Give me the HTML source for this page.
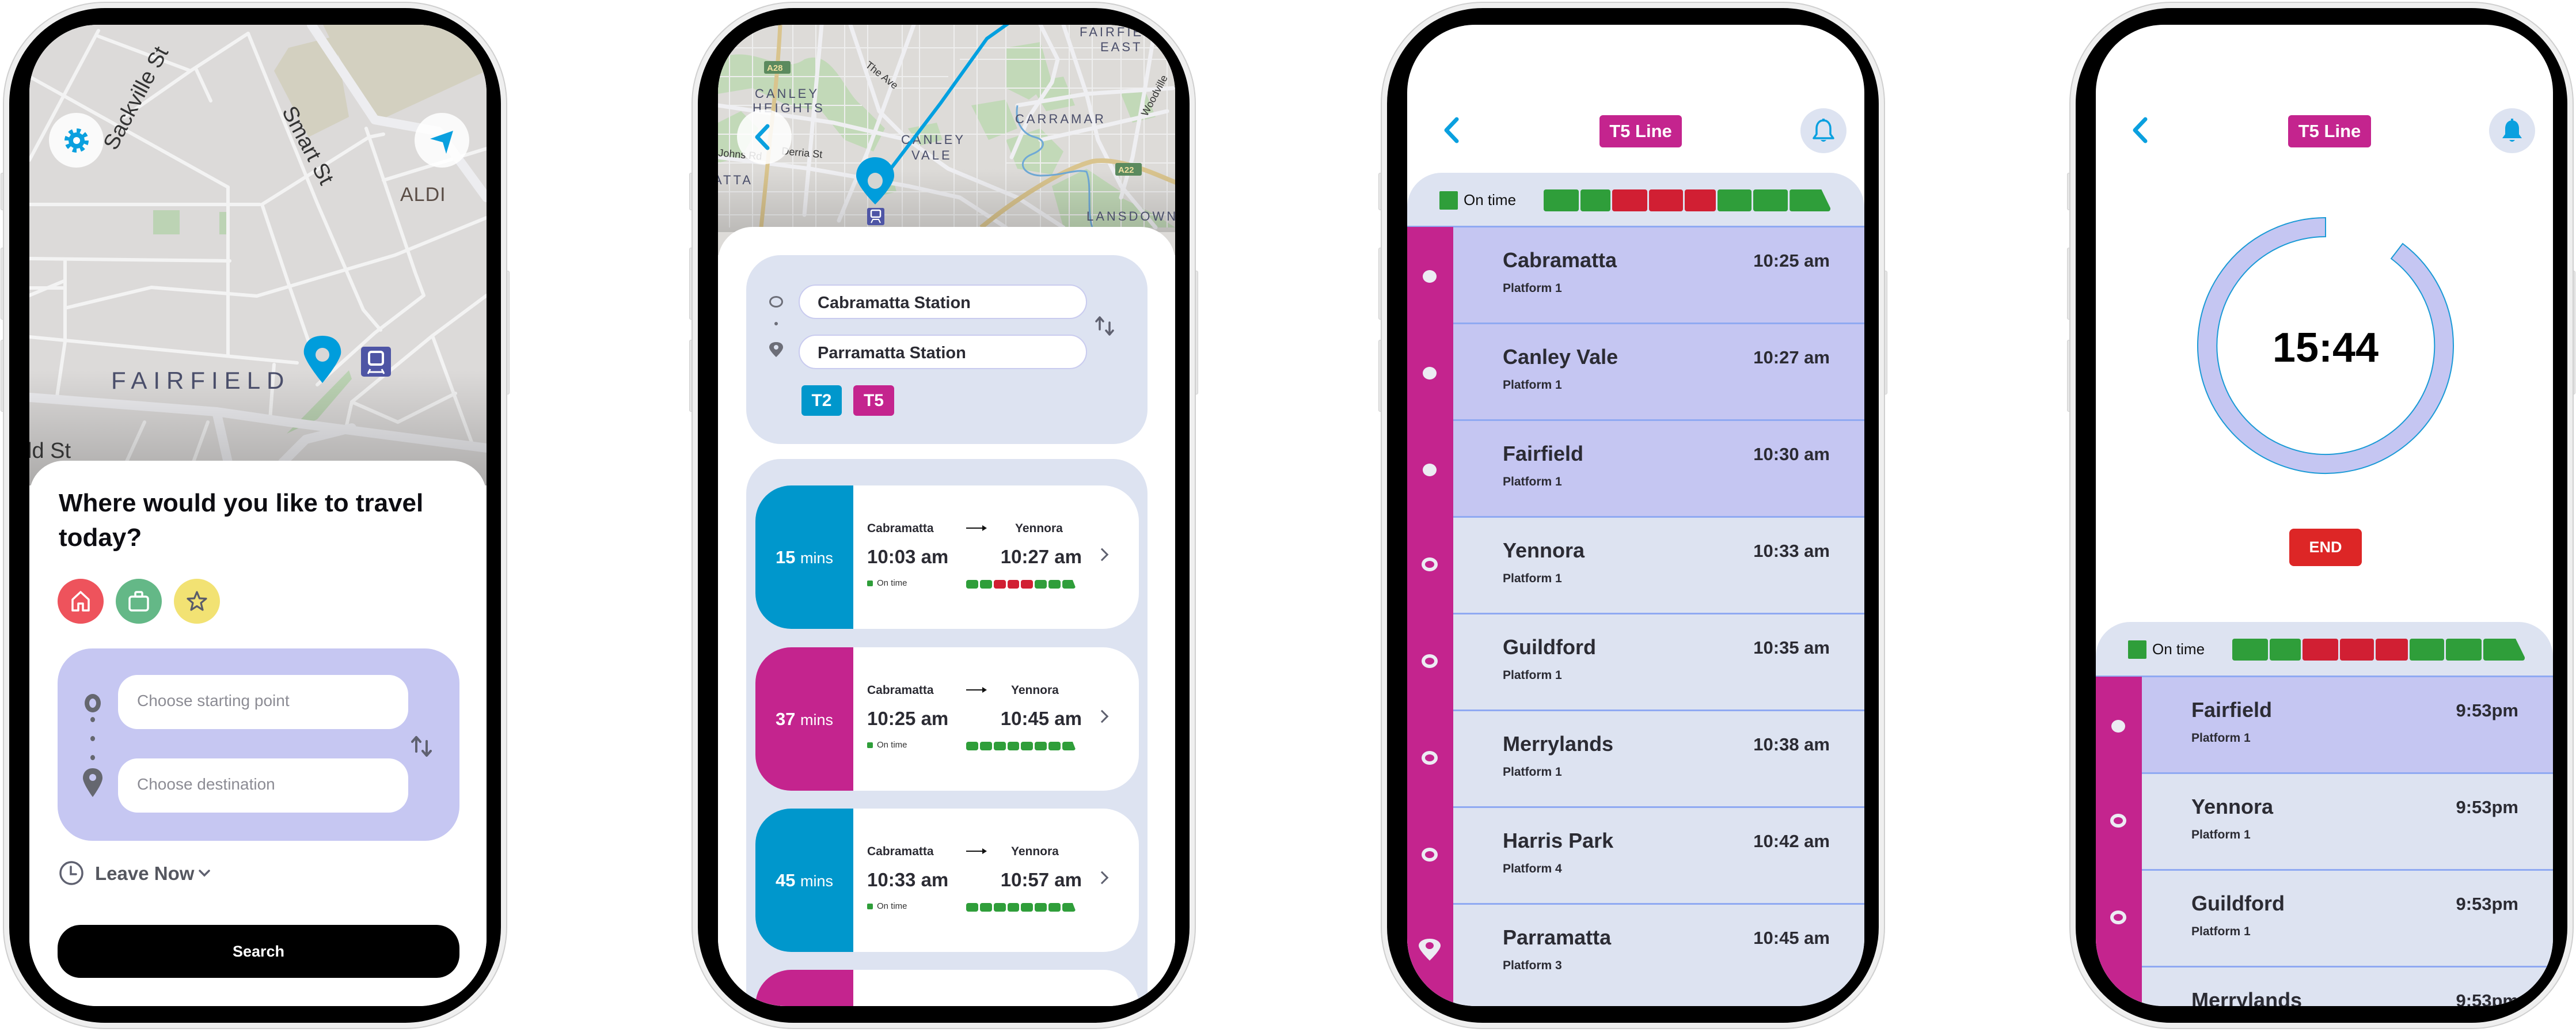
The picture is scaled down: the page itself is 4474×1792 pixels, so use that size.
<!DOCTYPE html>
<html><head><meta charset="utf-8">
<style>
*{box-sizing:border-box;margin:0;padding:0}
html,body{width:4474px;height:1792px;overflow:hidden}
body{background:#fff;position:relative;font-family:"Liberation Sans Narrow","Liberation Sans",sans-serif;color:#2b2b33}
.phone{position:absolute;top:5px;width:872px;height:1780px;border-radius:175px;background:#000;border:9px solid #efefef;box-shadow:0 0 0 2px #cfcfcf}
.btn{position:absolute;width:9px;background:#e6e6e6;border:1px solid #cfcfcf;border-radius:3px}
.screen{position:absolute;left:35px;top:29px;width:794px;height:1704px;border-radius:118px;overflow:hidden;background:#fff}
.abs{position:absolute}
.b{font-weight:bold}
.pill{border-radius:6px}
.seg{display:flex;gap:3px;position:absolute}
.seg div{height:100%;border-radius:4px}
.g{background:#2f9e3a}.r{background:#d11f33}
.last{clip-path:polygon(0 0,78% 0,100% 85%,100% 100%,0 100%)}
.row{position:absolute;left:0;width:794px;height:168px;border-top:3px solid #8fa9f2}
.row .nm{position:absolute;left:166px;top:36px;font-size:36px;font-weight:bold;color:#2b2b33}
.row .pf{position:absolute;left:166px;top:94px;font-size:21px;font-weight:bold;color:#2b2b33}
.row .tm{position:absolute;right:60px;top:40px;font-size:31px;font-weight:bold;color:#2b2b33}
.dot{position:absolute;left:27px;width:24px;height:22px;border-radius:50%;background:#ececf3}
.ring{position:absolute;left:25px;width:28px;height:24px;border-radius:50%;border:6px solid #ececf3}
.card{position:absolute;left:65px;width:666px;height:249px;background:#fff;border-radius:62px;overflow:hidden}
.card .lc{position:absolute;left:0;top:0;width:170px;height:100%;color:#fff;text-align:center;line-height:249px;font-size:31px;font-weight:bold}
.card .lc span{font-weight:normal;font-size:27px}
.card .f{position:absolute;left:194px;top:63px;font-size:21px;font-weight:bold}
.card .t{position:absolute;top:70px;font-size:21px;font-weight:bold}
.card .tt{position:absolute;top:105px;font-size:33px;font-weight:bold}
.card .ot{position:absolute;left:194px;top:161px;font-size:15px;color:#333}
.card .ot i{display:inline-block;width:10px;height:10px;background:#2f9e3a;border-radius:2px;margin-right:7px;vertical-align:-1px}
.card .arr{position:absolute;left:366px;top:73px;width:34px;height:2px;background:#111}
.card .arr:after{content:"";position:absolute;right:-2px;top:-4px;border-left:8px solid #111;border-top:5px solid transparent;border-bottom:5px solid transparent}
.card .chev{position:absolute;left:594px;top:112px;width:16px;height:16px;border-right:3px solid #5f6170;border-bottom:3px solid #5f6170;transform:rotate(-45deg)}
</style></head><body>

<div class="btn" style="left:1px;top:300px;height:65px"></div>
<div class="btn" style="left:1px;top:430px;height:125px"></div>
<div class="btn" style="left:1px;top:590px;height:125px"></div>
<div class="btn" style="left:876px;top:470px;height:215px"></div>
<div class="btn" style="left:1197px;top:300px;height:65px"></div>
<div class="btn" style="left:1197px;top:430px;height:125px"></div>
<div class="btn" style="left:1197px;top:590px;height:125px"></div>
<div class="btn" style="left:2072px;top:470px;height:215px"></div>
<div class="btn" style="left:2394px;top:300px;height:65px"></div>
<div class="btn" style="left:2394px;top:430px;height:125px"></div>
<div class="btn" style="left:2394px;top:590px;height:125px"></div>
<div class="btn" style="left:3269px;top:470px;height:215px"></div>
<div class="btn" style="left:3590px;top:300px;height:65px"></div>
<div class="btn" style="left:3590px;top:430px;height:125px"></div>
<div class="btn" style="left:3590px;top:590px;height:125px"></div>
<div class="btn" style="left:4464px;top:470px;height:215px"></div>

<!-- PHONE 1 -->
<div class="phone" style="left:7px"><div class="screen">
<svg class="abs" style="left:0;top:0" width="794" height="800" viewBox="0 0 794 800">
<rect width="794" height="800" fill="#dcdad9"/>
<polygon points="425,80 450,40 530,20 555,160 485,195" fill="#d3d0c0"/>
<polygon points="510,0 794,0 794,80 610,165 555,90" fill="#d3d0c0"/>
<rect x="215" y="322" width="46" height="42" fill="#bcd3b4"/>
<rect x="330" y="325" width="12" height="39" fill="#bcd3b4"/>
<polygon points="447,710 555,600 560,615 500,685" fill="#bcd3b4"/>
<g fill="none" stroke="#f3f3f3" stroke-width="6" stroke-linecap="round" stroke-linejoin="round">
<polyline points="0,312 400,312"/>
<polyline points="0,406 348,410"/>
<polyline points="0,457 62,457"/>
<polyline points="62,492 212,456 395,471 635,400 794,335"/>
<polyline points="0,542 340,575 465,587"/>
<polyline points="345,282 345,575"/>
<polyline points="0,90 345,282"/>
<polyline points="120,10 0,235"/>
<polyline points="120,20 280,80 380,15"/>
<polyline points="165,160 280,80"/>
<polyline points="290,78 315,132"/>
<polyline points="380,15 500,310 580,495 610,530"/>
<polyline points="404,312 590,195 615,190"/>
<polyline points="585,180 670,430 685,470 600,535 500,625"/>
<polyline points="404,312 452,455 485,550"/>
<polyline points="62,409 62,550 48,645"/>
<polyline points="425,590 418,685"/>
<polyline points="794,470 700,540 560,655 550,700"/>
<polyline points="700,540 770,730"/>
<polyline points="0,470 60,445"/>
<polyline points="615,270 794,215"/>
<polyline points="560,655 640,690 740,640"/>
<polyline points="200,690 150,800"/>
<polyline points="310,690 270,800"/>
</g>
<g fill="none" stroke="#ededf0" stroke-width="16" stroke-linecap="round" stroke-linejoin="round">
<polyline points="490,0 600,165 710,185 794,300"/>
<polyline points="0,647 325,672 450,690 794,735"/>
<polyline points="325,672 345,760"/>
<polyline points="440,760 480,720 560,700"/>
</g>
<defs><linearGradient id="sh" x1="0" y1="0" x2="0" y2="1"><stop offset="0" stop-color="#000" stop-opacity="0"/><stop offset="1" stop-color="#000" stop-opacity="0.22"/></linearGradient></defs>
<rect x="0" y="600" width="794" height="200" fill="url(#sh)"/>
<text x="150" y="220" transform="rotate(-62 150 220)" font-family="Liberation Sans" font-size="38" fill="#333">Sackville St</text>
<text x="438" y="150" transform="rotate(62 438 150)" font-family="Liberation Sans" font-size="38" fill="#333">Smart St</text>
<text x="644" y="306" font-family="Liberation Sans" font-size="34" fill="#5a4d46" letter-spacing="1">ALDI</text>
<text x="142" y="632" font-family="Liberation Sans" font-size="42" fill="#4a4e6a" letter-spacing="11">FAIRFIELD</text>
<text x="-4" y="752" font-family="Liberation Sans" font-size="38" fill="#333">ld St</text>
<rect x="576" y="559" width="52" height="52" rx="5" fill="#4e55a5"/>
<rect x="590" y="568" width="24" height="22" rx="4" fill="none" stroke="#fff" stroke-width="4"/>
<path d="M592 598 L588 606 M612 598 L616 606 M588 603 H616" stroke="#fff" stroke-width="3"/>
<path d="M509 540 C478 540 474 566 478 575 C484 592 509 622 509 622 C509 622 534 592 540 575 C544 566 540 540 509 540Z" fill="#009ddc"/>
<circle cx="509" cy="573" r="12" fill="#d8d7d7"/>
</svg>
<div class="abs" style="left:34px;top:153px;width:95px;height:95px;border-radius:50%;background:rgba(255,255,255,.85)"></div>
<svg class="abs" style="left:56px;top:175px" width="52" height="52" viewBox="0 0 52 52"><circle cx="26" cy="26" r="17" fill="none" stroke="#0aa0df" stroke-width="8" stroke-dasharray="6.7 6.65"/><circle cx="26" cy="26" r="14" fill="#0aa0df"/><circle cx="26" cy="26" r="6" fill="#fff"/></svg>
<div class="abs" style="left:669px;top:153px;width:95px;height:95px;border-radius:50%;background:rgba(255,255,255,.85)"></div>
<svg class="abs" style="left:694px;top:180px" width="46" height="46" viewBox="0 0 46 46"><path d="M2 18 L42 4 L30 44 L24 24Z" fill="#0aa0df"/></svg>
<div class="abs" style="left:0;top:757px;width:794px;height:960px;background:#fff;border-radius:60px 60px 0 0"></div>
<div class="abs b" style="left:51px;top:801px;line-height:60px;color:#0d0d12;font-family:'Liberation Sans',sans-serif;font-size:44px">Where would you like to travel<br>today?</div>
<div class="abs" style="left:49px;top:962px;width:80px;height:78px;border-radius:50%;background:#ee535c"></div>
<svg class="abs" style="left:69px;top:981px" width="40" height="40" viewBox="0 0 40 40"><path d="M6 36 V17 L20 4 L34 17 V36 H24 V24 H16 V36Z" fill="none" stroke="#fff" stroke-width="3.5" stroke-linejoin="round"/></svg>
<div class="abs" style="left:150px;top:962px;width:80px;height:78px;border-radius:50%;background:#64b887"></div>
<svg class="abs" style="left:170px;top:981px" width="40" height="40" viewBox="0 0 40 40"><rect x="4" y="12" width="32" height="24" rx="4" fill="none" stroke="#fff" stroke-width="3.5"/><rect x="14" y="4" width="12" height="8" rx="2" fill="none" stroke="#fff" stroke-width="3.5"/></svg>
<div class="abs" style="left:251px;top:962px;width:80px;height:78px;border-radius:50%;background:#f2e273"></div>
<svg class="abs" style="left:271px;top:981px" width="40" height="40" viewBox="0 0 40 40"><path d="M20 4 L24.5 15 L36 15.5 L27 23 L30 35 L20 28.5 L10 35 L13 23 L4 15.5 L15.5 15Z" fill="none" stroke="#5a5c6a" stroke-width="3.2" stroke-linejoin="round"/></svg>
<div class="abs" style="left:49px;top:1083px;width:698px;height:334px;border-radius:60px;background:#c6c7f2"></div>
<div class="abs" style="left:154px;top:1129px;width:504px;height:94px;border-radius:34px;background:#fff"></div>
<div class="abs" style="left:187px;top:1158px;font-size:28px;color:#8c8c94">Choose starting point</div>
<div class="abs" style="left:154px;top:1274px;width:504px;height:94px;border-radius:34px;background:#fff"></div>
<div class="abs" style="left:187px;top:1303px;font-size:28px;color:#8c8c94">Choose destination</div>
<div class="abs" style="left:96px;top:1162px;width:28px;height:32px;border-radius:50%;border:8px solid #65676f"></div>
<div class="abs" style="left:106px;top:1202px;width:8px;height:9px;border-radius:50%;background:#65676f"></div>
<div class="abs" style="left:106px;top:1235px;width:8px;height:9px;border-radius:50%;background:#65676f"></div>
<div class="abs" style="left:106px;top:1268px;width:8px;height:9px;border-radius:50%;background:#65676f"></div>
<svg class="abs" style="left:92px;top:1290px" width="36" height="52" viewBox="0 0 36 52"><path d="M18 1 C7 1 1 9 1 18 C1 28 18 51 18 51 C18 51 35 28 35 18 C35 9 29 1 18 1Z" fill="#65676f"/><circle cx="18" cy="17" r="6" fill="#c6c7f2"/></svg>
<svg class="abs" style="left:660px;top:1232px" width="44" height="44" viewBox="0 0 44 44"><path d="M12 30 V6 M5 13 L12 5 L19 13 M30 12 V36 M23 29 L30 37 L37 29" fill="none" stroke="#5f6170" stroke-width="4" stroke-linecap="round" stroke-linejoin="round"/></svg>
<svg class="abs" style="left:50px;top:1450px" width="46" height="46" viewBox="0 0 46 46"><circle cx="23" cy="23" r="19" fill="none" stroke="#5f6170" stroke-width="3.5"/><path d="M22 12 V25 H31" fill="none" stroke="#5f6170" stroke-width="3.5" stroke-linecap="round"/></svg>
<div class="abs" style="left:114px;top:1455px;font-size:33px;color:#55575f;font-weight:bold">Leave Now</div>
<svg class="abs" style="left:293px;top:1465px" width="22" height="16" viewBox="0 0 22 16"><path d="M3 4 L11 12 L19 4" fill="none" stroke="#5f6170" stroke-width="3.5" stroke-linecap="round"/></svg>
<div class="abs b" style="left:49px;top:1563px;width:698px;height:92px;border-radius:40px;background:#000;color:#fff;text-align:center;line-height:92px;font-size:27px;font-family:'Liberation Sans',sans-serif">Search</div>
</div></div>

<!-- PHONE 2 -->
<div class="phone" style="left:1203px"><div class="screen">
<svg class="abs" style="left:0;top:0" width="794" height="400" viewBox="0 0 794 400">
<rect width="794" height="400" fill="#dddbd8"/>
<g fill="#c2d9b8">
<path d="M0 60 C60 30 110 90 150 60 C200 40 220 120 250 140 L290 180 L270 220 L220 200 L180 150 L120 140 L60 110 L0 120Z"/>
<path d="M0 170 L40 150 L70 180 L40 230 L0 240Z"/>
<path d="M500 40 L560 30 L580 100 L540 130 L500 110Z"/>
<path d="M440 140 L500 130 L520 180 L470 200Z"/>
<path d="M500 200 L560 180 L600 220 L580 260 L520 250Z"/>
<path d="M580 280 L640 250 L700 290 L680 352 L600 352Z"/>
<path d="M640 320 L700 300 L760 330 L794 352 L650 352Z"/>
<path d="M330 180 L380 170 L390 200 L350 210Z"/>
<path d="M260 260 L300 250 L310 290 L270 300Z"/>
<path d="M700 120 L740 110 L760 160 L720 170Z"/>
<path d="M540 100 L600 90 L620 140 L570 150Z"/>
</g>
<g fill="none" stroke="#eeeeee" stroke-width="2">
<path d="M0 40 H794 M0 90 H400 M0 140 H250 M0 190 H794 M0 240 H300 M0 290 H794 M0 330 H794 M300 110 H794 M500 240 H794 M420 60 H794"/>
<path d="M20 0 V352 M60 0 V352 M130 0 V352 M170 0 V352 M220 0 V352 M260 0 V352 M320 0 V352 M350 0 V352 M410 0 V352 M450 0 V352 M500 0 V352 M560 0 V352 M610 0 V352 M650 0 V352 M700 0 V352 M740 0 V352 M780 0 V352"/>
</g>
<g fill="none" stroke="#efeff2" stroke-width="7" stroke-linecap="round">
<path d="M230 0 L280 150 L330 200 L400 250 L520 300 L600 352"/>
<path d="M340 0 L260 220 L210 340"/>
<path d="M0 140 L200 170 L330 200"/>
<path d="M0 230 L160 250 L330 280 L420 300 L500 352"/>
<path d="M560 0 L590 60 L580 100 L540 160 L510 230"/>
<path d="M600 0 L640 120 L660 200 L700 280 L760 352"/>
<path d="M520 140 L640 120 L790 110"/>
<path d="M560 200 L650 180 L780 150"/>
<path d="M760 0 L740 120 L720 230 L700 300"/>
<path d="M180 0 L150 330"/>
</g>
<path d="M108 0 C105 60 100 120 90 200 C85 260 78 320 75 352" fill="none" stroke="#d9c48e" stroke-width="7"/>
<path d="M457 352 C520 300 600 250 651 237 C700 230 760 260 798 275" fill="none" stroke="#d9c48e" stroke-width="8"/>
<path d="M520 140 C515 170 530 190 550 195 C570 200 570 215 545 225 C520 235 525 260 560 262 C600 262 620 250 640 255 C650 280 640 320 650 352" fill="none" stroke="#6fa9d6" stroke-width="3"/>
<defs><linearGradient id="sh2" x1="0" y1="0" x2="0" y2="1"><stop offset="0" stop-color="#000" stop-opacity="0"/><stop offset="1" stop-color="#000" stop-opacity="0.15"/></linearGradient></defs>
<rect x="0" y="250" width="794" height="110" fill="url(#sh2)"/>
<g font-family="Liberation Sans" fill="#4a4e6a" letter-spacing="4">
<text x="64" y="127" font-size="22">CANLEY</text><text x="60" y="152" font-size="22">HEIGHTS</text>
<text x="318" y="207" font-size="22">CANLEY</text><text x="336" y="234" font-size="22">VALE</text>
<text x="516" y="171" font-size="22">CARRAMAR</text>
<text x="640" y="340" font-size="22">LANSDOWN</text>
<text x="628" y="20" font-size="22">FAIRFIELD</text><text x="664" y="46" font-size="22">EAST</text>
<text x="-8" y="277" font-size="22">ATTA</text>
</g>
<g font-family="Liberation Sans" fill="#333" font-size="18">
<text x="110" y="225" transform="rotate(5 110 225)">Derria St</text>
<text x="0" y="228" transform="rotate(5 0 228)">Johns Rd</text>
<text x="255" y="72" transform="rotate(38 255 72)">The Ave</text>
<text x="745" y="160" transform="rotate(-62 745 160)">Woodville</text>
</g>
<rect x="80" y="63" width="46" height="22" rx="3" fill="#5b8a5e"/><text x="85" y="80" font-family="Liberation Sans" font-size="15" font-weight="bold" fill="#f0e0a0">A28</text>
<rect x="690" y="240" width="46" height="22" rx="3" fill="#5b8a5e"/><text x="695" y="257" font-family="Liberation Sans" font-size="15" font-weight="bold" fill="#f0e0a0">A22</text>
<path d="M300 250 L386 137 L467 24 L505 -3" fill="none" stroke="#00a0e0" stroke-width="6" stroke-linecap="round"/>
<rect x="259" y="318" width="30" height="30" rx="3" fill="#4e55a5"/>
<rect x="266" y="322" width="16" height="12" rx="2" fill="none" stroke="#fff" stroke-width="2.5"/>
<path d="M266 344 L269 338 H279 L282 344" stroke="#fff" stroke-width="2" fill="none"/>
<path d="M273 230 C252 230 240 246 240 262 C240 280 273 312 273 312 C273 312 306 280 306 262 C306 246 294 230 273 230Z" fill="#009ddc"/>
<ellipse cx="273" cy="271" rx="13" ry="14" fill="#d5d6d3"/>
</svg>
<div class="abs" style="left:33px;top:147px;width:95px;height:95px;border-radius:50%;background:rgba(255,255,255,.85)"></div>
<svg class="abs" style="left:62px;top:172px" width="30" height="46" viewBox="0 0 30 46"><path d="M24 4 L6 23 L24 42" fill="none" stroke="#0aa0df" stroke-width="7" stroke-linecap="round" stroke-linejoin="round"/></svg>
<div class="abs" style="left:0;top:351px;width:794px;height:1353px;background:#fff;border-radius:60px 60px 0 0"></div>
<div class="abs" style="left:49px;top:400px;width:697px;height:328px;border-radius:60px;background:#dde3f1"></div>
<div class="abs" style="left:89px;top:471px;width:24px;height:20px;border-radius:50%;border:3px solid #6c6e78"></div>
<div class="abs" style="left:98px;top:516px;width:6px;height:6px;border-radius:50%;background:#6c6e78"></div>
<svg class="abs" style="left:88px;top:550px" width="26" height="28" viewBox="0 0 26 28"><path d="M13 1 C5 1 1 5 1 10 C1 16 13 27 13 27 C13 27 25 16 25 10 C25 5 21 1 13 1Z" fill="#6c6e78"/><circle cx="13" cy="10" r="4" fill="#dde3f1"/></svg>
<div class="abs" style="left:140px;top:451px;width:501px;height:60px;border-radius:30px;background:#fff;border:2px solid #c9cbef"></div>
<div class="abs b" style="left:173px;top:467px;font-size:29px;color:#2b2b33">Cabramatta Station</div>
<div class="abs" style="left:140px;top:538px;width:501px;height:60px;border-radius:30px;background:#fff;border:2px solid #c9cbef"></div>
<div class="abs b" style="left:173px;top:554px;font-size:29px;color:#2b2b33">Parramatta Station</div>
<svg class="abs" style="left:652px;top:505px" width="40" height="36" viewBox="0 0 40 36"><path d="M11 24 V4 M5 10 L11 3 L17 10 M28 12 V32 M22 26 L28 33 L34 26" fill="none" stroke="#5f6170" stroke-width="3.5" stroke-linecap="round" stroke-linejoin="round"/></svg>
<div class="abs b pill" style="left:145px;top:626px;width:70px;height:53px;background:#0097cc;color:#fff;text-align:center;line-height:53px;font-size:30px">T2</div>
<div class="abs b pill" style="left:235px;top:626px;width:71px;height:53px;background:#c4248e;color:#fff;text-align:center;line-height:53px;font-size:30px">T5</div>
<div class="abs" style="left:49px;top:754px;width:697px;height:950px;border-radius:60px 60px 0 0;background:#dde3f1"></div>

<div class="card" style="top:800px"><div class="lc" style="background:#0097cc">15 <span>mins</span></div>
<div class="f">Cabramatta</div><div class="arr"></div><div class="t" style="left:451px;top:63px">Yennora</div>
<div class="tt" style="left:194px">10:03 am</div><div class="tt" style="right:99px">10:27 am</div><div class="chev"></div>
<div class="ot"><i></i>On time</div>
<div class="seg" style="left:366px;top:164px;width:190px;height:15px"><div class="g" style="flex:1"></div><div class="g" style="flex:1"></div><div class="r" style="flex:1"></div><div class="r" style="flex:1"></div><div class="r" style="flex:1"></div><div class="g" style="flex:1"></div><div class="g" style="flex:1"></div><div class="g last" style="flex:1.1"></div></div></div>

<div class="card" style="top:1081px"><div class="lc" style="background:#c4248e">37 <span>mins</span></div>
<div class="f">Cabramatta</div><div class="arr"></div><div class="t" style="left:444px;top:63px">Yennora</div>
<div class="tt" style="left:194px">10:25 am</div><div class="tt" style="right:99px">10:45 am</div><div class="chev"></div>
<div class="ot"><i></i>On time</div>
<div class="seg" style="left:366px;top:164px;width:190px;height:15px"><div class="g" style="flex:1"></div><div class="g" style="flex:1"></div><div class="g" style="flex:1"></div><div class="g" style="flex:1"></div><div class="g" style="flex:1"></div><div class="g" style="flex:1"></div><div class="g" style="flex:1"></div><div class="g last" style="flex:1.1"></div></div></div>

<div class="card" style="top:1361px"><div class="lc" style="background:#0097cc">45 <span>mins</span></div>
<div class="f">Cabramatta</div><div class="arr"></div><div class="t" style="left:444px;top:63px">Yennora</div>
<div class="tt" style="left:194px">10:33 am</div><div class="tt" style="right:99px">10:57 am</div><div class="chev"></div>
<div class="ot"><i></i>On time</div>
<div class="seg" style="left:366px;top:164px;width:190px;height:15px"><div class="g" style="flex:1"></div><div class="g" style="flex:1"></div><div class="g" style="flex:1"></div><div class="g" style="flex:1"></div><div class="g" style="flex:1"></div><div class="g" style="flex:1"></div><div class="g" style="flex:1"></div><div class="g last" style="flex:1.1"></div></div></div>

<div class="card" style="top:1641px;height:63px;border-radius:62px 62px 0 0"><div class="lc" style="background:#c4248e"></div></div>
</div></div>

<!-- PHONE 3 -->
<div class="phone" style="left:2400px"><div class="screen">
<svg class="abs" style="left:62px;top:160px" width="30" height="46" viewBox="0 0 30 46"><path d="M24 4 L6 23 L24 42" fill="none" stroke="#0aa0df" stroke-width="7" stroke-linecap="round" stroke-linejoin="round"/></svg>
<div class="abs b pill" style="left:334px;top:157px;width:143px;height:56px;background:#c4248e;color:#fff;text-align:center;line-height:56px;font-size:31px">T5 Line</div>
<div class="abs" style="left:683px;top:145px;width:80px;height:78px;border-radius:50%;background:#dde3f1"></div>
<svg class="abs" style="left:703px;top:162px" width="40" height="46" viewBox="0 0 40 46"><path d="M20 4 C12 4 8 11 8 18 V28 L3 35 H37 L32 28 V18 C32 11 28 4 20 4Z" fill="none" stroke="#0aa0df" stroke-width="3.5" stroke-linejoin="round"/><path d="M15 38 Q20 44 25 38Z" fill="#0aa0df"/><rect x="18" y="1" width="4" height="5" fill="#0aa0df"/></svg>
<div class="abs" style="left:0;top:257px;width:794px;height:120px;border-radius:60px 60px 0 0;background:#dde3f1"></div>
<div class="abs" style="left:56px;top:289px;width:32px;height:32px;background:#2f9e3a;border-radius:2px"></div>
<div class="abs" style="left:98px;top:289px;font-size:26px;color:#111">On time</div>
<div class="seg" style="left:237px;top:286px;width:498px;height:38px"><div class="g" style="flex:107"></div><div class="g" style="flex:93"></div><div class="r" style="flex:108"></div><div class="r" style="flex:103"></div><div class="r" style="flex:96"></div><div class="g" style="flex:104"></div><div class="g" style="flex:107"></div><div class="g last" style="flex:125"></div></div>
<div class="row" style="top:349px;background:#c5c6f2"><div class="nm">Cabramatta</div><div class="pf">Platform 1</div><div class="tm">10:25 am</div></div>
<div class="row" style="top:517px;background:#c5c6f2"><div class="nm">Canley Vale</div><div class="pf">Platform 1</div><div class="tm">10:27 am</div></div>
<div class="row" style="top:685px;background:#c5c6f2"><div class="nm">Fairfield</div><div class="pf">Platform 1</div><div class="tm">10:30 am</div></div>
<div class="row" style="top:853px;background:#dde3f1"><div class="nm">Yennora</div><div class="pf">Platform 1</div><div class="tm">10:33 am</div></div>
<div class="row" style="top:1021px;background:#dde3f1"><div class="nm">Guildford</div><div class="pf">Platform 1</div><div class="tm">10:35 am</div></div>
<div class="row" style="top:1189px;background:#dde3f1"><div class="nm">Merrylands</div><div class="pf">Platform 1</div><div class="tm">10:38 am</div></div>
<div class="row" style="top:1357px;background:#dde3f1"><div class="nm">Harris Park</div><div class="pf">Platform 4</div><div class="tm">10:42 am</div></div>
<div class="row" style="top:1525px;background:#dde3f1;height:179px"><div class="nm">Parramatta</div><div class="pf">Platform 3</div><div class="tm">10:45 am</div></div>
<div class="abs" style="left:0;top:351px;width:80px;height:1353px;background:#c4248e"></div>
<div class="dot" style="top:426px"></div><div class="dot" style="top:594px"></div><div class="dot" style="top:762px"></div>
<div class="ring" style="top:925px"></div><div class="ring" style="top:1093px"></div><div class="ring" style="top:1261px"></div><div class="ring" style="top:1429px"></div>
<svg class="abs" style="left:19px;top:1585px" width="40" height="42" viewBox="0 0 40 42"><path d="M20 2 C8 2 1 8 1 14 C1 22 20 40 20 40 C20 40 39 22 39 14 C39 8 32 2 20 2Z" fill="#ececf3"/><ellipse cx="20" cy="14" rx="7" ry="6" fill="#c4248e"/></svg>
</div></div>

<!-- PHONE 4 -->
<div class="phone" style="left:3596px"><div class="screen">
<svg class="abs" style="left:62px;top:160px" width="30" height="46" viewBox="0 0 30 46"><path d="M24 4 L6 23 L24 42" fill="none" stroke="#0aa0df" stroke-width="7" stroke-linecap="round" stroke-linejoin="round"/></svg>
<div class="abs b pill" style="left:334px;top:157px;width:144px;height:56px;background:#c4248e;color:#fff;text-align:center;line-height:56px;font-size:31px">T5 Line</div>
<div class="abs" style="left:683px;top:145px;width:80px;height:78px;border-radius:50%;background:#dde3f1"></div>
<svg class="abs" style="left:703px;top:162px" width="40" height="46" viewBox="0 0 40 46"><path d="M20 4 C12 4 8 11 8 18 V28 L3 35 H37 L32 28 V18 C32 11 28 4 20 4Z" fill="#0aa0df"/><path d="M15 38 Q20 44 25 38Z" fill="#0aa0df"/><rect x="18" y="1" width="4" height="5" fill="#0aa0df"/></svg>
<svg class="abs" style="left:0;top:300px" width="794" height="520" viewBox="0 300 794 520">
<path d="M399 335 A222 222 0 1 0 533 380 L513 406 A189 189 0 1 1 399 368 Z" fill="#c5c6f2" stroke="#1a9ad6" stroke-width="2"/>
</svg>
<div class="abs b" style="left:199px;top:520px;width:400px;text-align:center;font-size:72px;color:#000;font-family:'Liberation Sans',sans-serif">15:44</div>
<div class="abs b" style="left:336px;top:875px;width:126px;height:65px;border-radius:8px;background:#dd2626;color:#fff;text-align:center;line-height:65px;font-size:27px;font-family:'Liberation Sans',sans-serif">END</div>
<div class="abs" style="left:0;top:1037px;width:794px;height:120px;border-radius:60px 60px 0 0;background:#dde3f1"></div>
<div class="abs" style="left:56px;top:1069px;width:32px;height:32px;background:#2f9e3a;border-radius:2px"></div>
<div class="abs" style="left:98px;top:1069px;font-size:26px;color:#111">On time</div>
<div class="seg" style="left:237px;top:1066px;width:508px;height:38px"><div class="g" style="flex:107"></div><div class="g" style="flex:93"></div><div class="r" style="flex:108"></div><div class="r" style="flex:103"></div><div class="r" style="flex:96"></div><div class="g" style="flex:104"></div><div class="g" style="flex:107"></div><div class="g last" style="flex:125"></div></div>
<div class="row" style="top:1130px;background:#c5c6f2"><div class="nm">Fairfield</div><div class="pf">Platform 1</div><div class="tm">9:53pm</div></div>
<div class="row" style="top:1298px;background:#dde3f1"><div class="nm">Yennora</div><div class="pf">Platform 1</div><div class="tm">9:53pm</div></div>
<div class="row" style="top:1466px;background:#dde3f1"><div class="nm">Guildford</div><div class="pf">Platform 1</div><div class="tm">9:53pm</div></div>
<div class="row" style="top:1634px;background:#dde3f1;height:70px"><div class="nm">Merrylands</div><div class="tm">9:53pm</div></div>
<div class="abs" style="left:0;top:1132px;width:80px;height:572px;background:#c4248e"></div>
<div class="dot" style="top:1207px"></div>
<div class="ring" style="top:1370px"></div><div class="ring" style="top:1538px"></div>
</div></div>

</body></html>
